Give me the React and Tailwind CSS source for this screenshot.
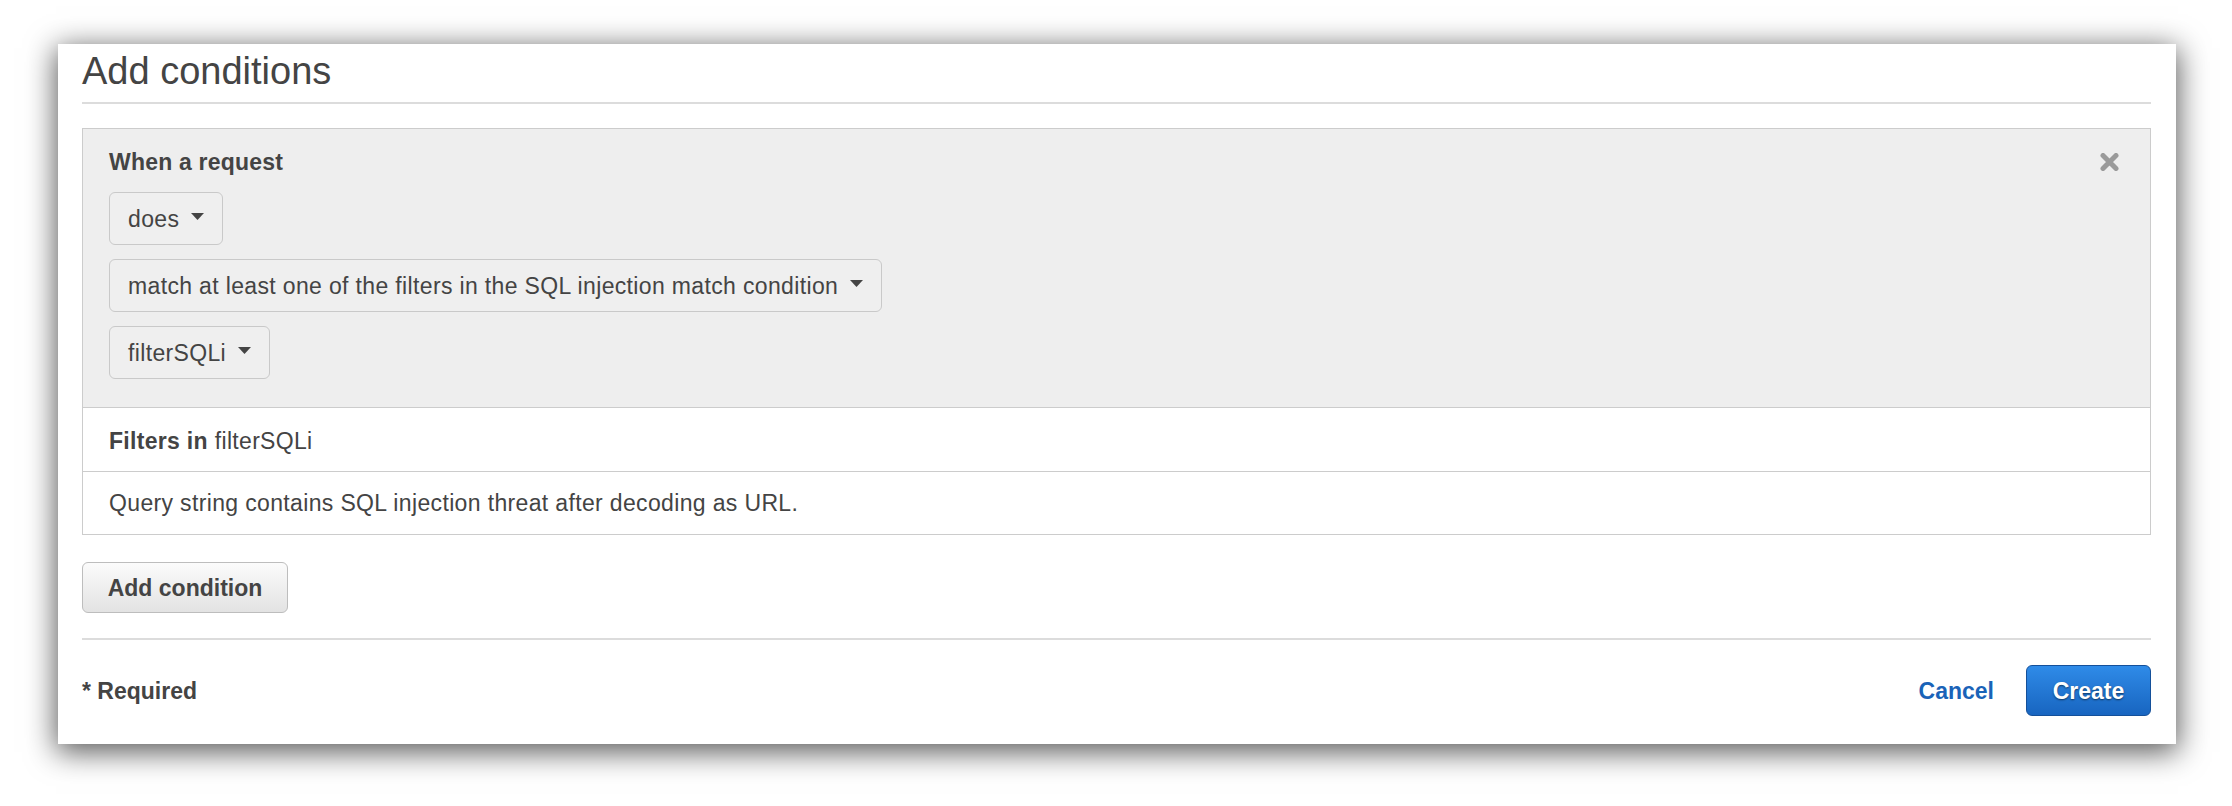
import React from 'react';

const font = { fontFamily: '"Liberation Sans", Arial, Helvetica, sans-serif' };

function Caret() {
  return (
    <svg width="13" height="7" viewBox="0 0 13 7" className="mb-[5px] shrink-0">
      <path d="M0 0 L13 0 L6.5 7 Z" fill="#444444" />
    </svg>
  );
}

function Dropdown({ label }) {
  return (
    <button className="flex h-[53px] items-center gap-[12px] self-start rounded-[6px] border border-[#c9c9c9] bg-[#efefef] pl-[18px] pr-[18px] text-[23px] leading-[32px] tracking-[0.35px] text-[#444444]">
      <span>{label}</span>
      <Caret />
    </button>
  );
}

function CloseIcon() {
  return (
    <svg width="19" height="18" viewBox="0 0 19 18" className="shrink-0">
      <path d="M3 2.5 L16 15.5 M16 2.5 L3 15.5" stroke="#9a9a9a" strokeWidth="5" strokeLinecap="round" />
    </svg>
  );
}

export default function App() {
  return (
    <div className="min-h-screen bg-white pl-[58px] pt-[44px]" style={font}>
      <div className="flex h-[700px] w-[2118px] flex-col bg-white pl-[24px] pr-[25px] shadow-[0_6px_28px_2px_rgba(0,0,0,0.65)]">
        <h1 className="pt-[8px] text-[38px] font-normal leading-[38px] text-[#444444]">Add conditions</h1>
        <div className="mt-[12px] h-[2px] bg-[#dcdcdc]" />

        <div className="mt-[24px] border border-[#cccccc]">
          <div className="flex flex-col gap-[14px] bg-[#eeeeee] pb-[28px] pl-[26px] pr-[31px] pt-[17px]">
            <div className="flex items-center justify-between">
              <span className="text-[23px] font-bold leading-[32px] tracking-[0.2px] text-[#444444]">When a request</span>
              <CloseIcon />
            </div>
            <Dropdown label="does" />
            <Dropdown label="match at least one of the filters in the SQL injection match condition" />
            <Dropdown label="filterSQLi" />
          </div>
          <div className="flex h-[64px] items-center border-t border-[#cccccc] pl-[26px] pt-[3px] text-[23px] leading-[32px] tracking-[0.3px] text-[#444444]">
            <span className="font-bold">Filters in</span>
            <span className="ml-[7px]">filterSQLi</span>
          </div>
          <div className="flex h-[63px] items-center border-t border-[#cccccc] pl-[26px] text-[23px] leading-[32px] tracking-[0.35px] text-[#444444]">
            Query string contains SQL injection threat after decoding as URL.
          </div>
        </div>

        <button className="mt-[27px] flex h-[51px] w-[206px] items-center justify-center rounded-[6px] border border-[#bdbdbd] bg-gradient-to-b from-[#fbfbfb] to-[#e3e3e3] text-[23px] font-bold leading-[32px] text-[#444444]">
          Add condition
        </button>

        <div className="mt-[25px] h-[2px] bg-[#dcdcdc]" />

        <div className="flex items-center justify-between pt-[25px]">
          <span className="text-[23px] font-bold leading-[32px] text-[#444444]">* Required</span>
          <div className="flex items-center gap-[32px]">
            <button className="text-[23px] font-bold leading-[32px] text-[#1a63b8]">Cancel</button>
            <button className="flex h-[51px] w-[125px] items-center justify-center rounded-[6px] border border-[#14509a] bg-gradient-to-b from-[#2f8be8] to-[#1865c0] text-[23px] font-bold leading-[32px] text-white [text-shadow:0_1px_2px_rgba(0,0,0,0.55)]">
              Create
            </button>
          </div>
        </div>
      </div>
    </div>
  );
}
